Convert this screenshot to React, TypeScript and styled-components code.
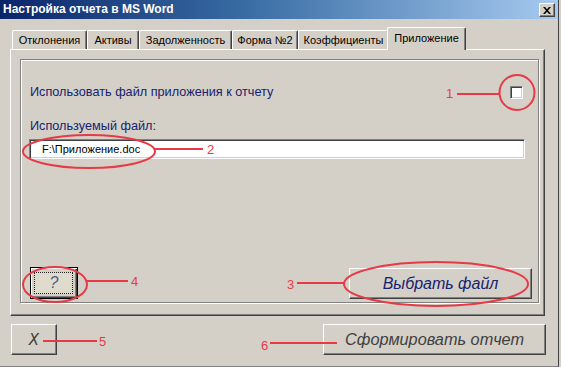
import React from "react";
import styled, { createGlobalStyle } from "styled-components";

const Global = createGlobalStyle`
  html, body { margin: 0; padding: 0; background: #d4d0c8; }
  body { font-family: "Liberation Sans", Arial, sans-serif; }
  #root { width: 561px; height: 367px; overflow: hidden; }
`;

const Window = styled.div`
  position: relative;
  box-sizing: border-box;
  width: 559px;
  height: 367px;
  background: #d4d0c8;
  border-right: 1px solid #404040;
  border-bottom: 1px solid #808080;
  display: flex;
  flex-direction: column;
`;

const TitleBar = styled.div`
  height: 19px;
  flex: none;
  background: linear-gradient(to right, #0a246a 0%, #3a6ea5 45%, #a6caf0 100%);
  display: flex;
  align-items: flex-start;
  justify-content: space-between;
  padding: 0 3px 0 3px;
`;

const Title = styled.div`
  color: #fff;
  font-weight: bold;
  font-size: 12px;
  line-height: 19px;
`;

const CloseButton = styled.div`
  box-sizing: border-box;
  width: 16px;
  height: 14px;
  margin-top: 3px;
  background: #d4d0c8;
  border-top: 1px solid #fff;
  border-left: 1px solid #fff;
  border-right: 1px solid #404040;
  border-bottom: 1px solid #404040;
  box-shadow: inset -1px -1px 0 #808080;
  display: flex;
  align-items: center;
  justify-content: center;
`;

const Body = styled.div`
  display: flex;
  flex-direction: column;
  padding: 9px 0 0 10px;
`;

const TabStrip = styled.div`
  display: flex;
  align-items: flex-end;
  height: 22px;
  padding-left: 2px;
  position: relative;
  z-index: 1;
  margin-bottom: -1px;
`;

const Tab = styled.div<{ $active?: boolean; $w: number }>`
  box-sizing: border-box;
  width: ${(p) => p.$w + (p.$active ? 4 : 0)}px;
  height: ${(p) => (p.$active ? 23 : 19)}px;
  margin: ${(p) => (p.$active ? "0 -2px 0 -2px" : "0 0 1px 0")};
  padding-top: ${(p) => (p.$active ? 3 : 2)}px;
  background: #d4d0c8;
  border-top: 1px solid #fff;
  border-left: 1px solid #fff;
  border-right: 1px solid #404040;
  border-radius: 2px 2px 0 0;
  box-shadow: inset -1px 0 0 #808080;
  font-size: 11px;
  line-height: 14px;
  text-align: center;
  color: #000;
  white-space: nowrap;
  position: relative;
  z-index: ${(p) => (p.$active ? 2 : 1)};
`;

const Panel = styled.div`
  box-sizing: border-box;
  width: 535px;
  height: 267px;
  border-top: 1px solid #fff;
  border-left: 1px solid #fff;
  border-right: 1px solid #404040;
  border-bottom: 1px solid #404040;
  box-shadow: inset -1px -1px 0 #808080;
  padding: 9px 5px 12px 9px;
  display: flex;
`;

const Frame = styled.div`
  flex: 1;
  box-sizing: border-box;
  border: 1px solid #808080;
  box-shadow: inset 1px 1px 0 #fff, 1px 1px 0 #fff;
  display: flex;
  flex-direction: column;
  padding: 0 6px 3px 9px;
`;

const CheckRow = styled.label`
  display: flex;
  align-items: center;
  justify-content: space-between;
  height: 20px;
  margin-top: 22px;
  padding-right: 9px;
  font-size: 12.7px;
  color: #16226e;
`;

const CheckBox = styled.span`
  box-sizing: border-box;
  width: 13px;
  height: 13px;
  background: #fff;
  border-top: 1px solid #808080;
  border-left: 1px solid #808080;
  border-right: 1px solid #fff;
  border-bottom: 1px solid #fff;
  box-shadow: inset 1px 1px 0 #404040, inset -1px -1px 0 #d4d0c8;
`;

const FieldLabel = styled.div`
  margin-top: 16px;
  font-size: 12.7px;
  line-height: 16px;
  color: #16226e;
`;

const FileInput = styled.div`
  box-sizing: border-box;
  width: 496px;
  height: 20px;
  margin: 5px 0 0 -1px;
  background: #fff;
  border-top: 1px solid #808080;
  border-left: 1px solid #808080;
  border-right: 1px solid #fff;
  border-bottom: 1px solid #fff;
  box-shadow: inset 1px 1px 0 #404040, inset -1px -1px 0 #d4d0c8;
  padding-left: 12px;
  font-size: 11px;
  line-height: 18px;
  color: #000;
`;

const ButtonRow = styled.div`
  margin-top: auto;
  display: flex;
  align-items: flex-end;
  justify-content: space-between;
`;

const RaisedButton = styled.div<{ $w: number; $color?: string; $size?: number }>`
  box-sizing: border-box;
  width: ${(p) => p.$w}px;
  height: 31px;
  background: #d4d0c8;
  border-top: 1px solid #fff;
  border-left: 1px solid #fff;
  border-right: 1px solid #404040;
  border-bottom: 1px solid #404040;
  box-shadow: inset -1px -1px 0 #808080;
  display: flex;
  align-items: center;
  justify-content: center;
  font-size: ${(p) => p.$size ?? 16}px;
  font-style: italic;
  color: ${(p) => p.$color ?? "#16226e"};
`;

const DefaultButton = styled.div`
  box-sizing: border-box;
  position: relative;
  width: 48px;
  height: 32px;
  background: #d4d0c8;
  border: 1px solid #000;
  box-shadow: inset 1px 1px 0 #fff, inset -1px -1px 0 #404040, inset -2px -2px 0 #808080;
  display: flex;
  align-items: center;
  justify-content: center;
  font-size: 16px;
  font-style: italic;
  color: #16226e;
  &::after {
    content: "";
    position: absolute;
    left: 3px;
    top: 4px;
    right: 4px;
    bottom: 4px;
    border: 1px dotted #202020;
    background: rgba(255, 255, 220, 0.25);
  }
`;

const Footer = styled.div`
  display: flex;
  justify-content: space-between;
  width: 535px;
  margin: 8px 0 0 1px;
`;

const ThinX = styled.span`
  font-weight: 300;
  font-family: "DejaVu Sans", sans-serif;
  font-size: 15px;
`;

const Overlay = styled.svg`
  position: absolute;
  left: 0;
  top: 0;
  width: 561px;
  height: 367px;
  pointer-events: none;
  overflow: visible;
`;

const RED = "#e63a46";

const marks = [
  { n: "1", tx: 446, ty: 98, line: [457, 94, 500, 94] },
  { n: "2", tx: 207, ty: 154, line: [155, 149, 203, 149] },
  { n: "3", tx: 287, ty: 289, line: [297, 283, 345, 283] },
  { n: "4", tx: 131, ty: 286, line: [87, 281, 128, 281] },
  { n: "5", tx: 99, ty: 346, line: [43, 341, 97, 341] },
  { n: "6", tx: 261, ty: 350, line: [270, 343, 337, 343] },
];

const tabs = [
  { t: "Отклонения", w: 75 },
  { t: "Активы", w: 52 },
  { t: "Задолженность", w: 93 },
  { t: "Форма №2", w: 66 },
  { t: "Коэффициенты", w: 91 },
  { t: "Приложение", w: 75 },
];

export default function App() {
  return (
    <>
      <Global />
      <Window>
        <TitleBar>
          <Title>Настройка отчета в MS Word</Title>
          <CloseButton>
            <svg width="8" height="7" viewBox="0 0 8 7">
              <path d="M0 0h2l2 2.2L6 0h2L5 3.5 8 7H6L4 4.8 2 7H0l3-3.5z" fill="#000" />
            </svg>
          </CloseButton>
        </TitleBar>
        <Body>
          <TabStrip>
            {tabs.map((t, i) => (
              <Tab key={t.t} $w={t.w} $active={i === tabs.length - 1}>
                {t.t}
              </Tab>
            ))}
          </TabStrip>
          <Panel>
            <Frame>
              <CheckRow>
                <span>Использовать файл приложения к отчету</span>
                <CheckBox />
              </CheckRow>
              <FieldLabel>Используемый файл:</FieldLabel>
              <FileInput>F:\Приложение.doc</FileInput>
              <ButtonRow>
                <DefaultButton>?</DefaultButton>
                <RaisedButton $w={183}>Выбрать файл</RaisedButton>
              </ButtonRow>
            </Frame>
          </Panel>
          <Footer>
            <RaisedButton $w={46} $color="#404040">
              <ThinX>X</ThinX>
            </RaisedButton>
            <RaisedButton $w={223} $color="#404040" $size={16.3}>
              Сформировать отчет
            </RaisedButton>
          </Footer>
        </Body>
        <Overlay viewBox="0 0 561 367">
          <circle cx={517} cy={92.5} r={17.5} fill="none" stroke={RED} strokeWidth={2} />
          <ellipse cx={89} cy={151.5} rx={66} ry={16.5} fill="none" stroke={RED} strokeWidth={2} />
          <ellipse cx={436} cy={284} rx={92} ry={22} fill="none" stroke={RED} strokeWidth={2} />
          <ellipse cx={55} cy={284.5} rx={32} ry={17.5} fill="none" stroke={RED} strokeWidth={2} />
          {marks.map((m) => (
            <g key={m.n}>
              <line x1={m.line[0]} y1={m.line[1]} x2={m.line[2]} y2={m.line[3]} stroke={RED} strokeWidth={2} />
              <text x={m.tx} y={m.ty} fill={RED} fontSize={13} fontFamily="Liberation Sans, Arial, sans-serif">
                {m.n}
              </text>
            </g>
          ))}
        </Overlay>
      </Window>
    </>
  );
}
